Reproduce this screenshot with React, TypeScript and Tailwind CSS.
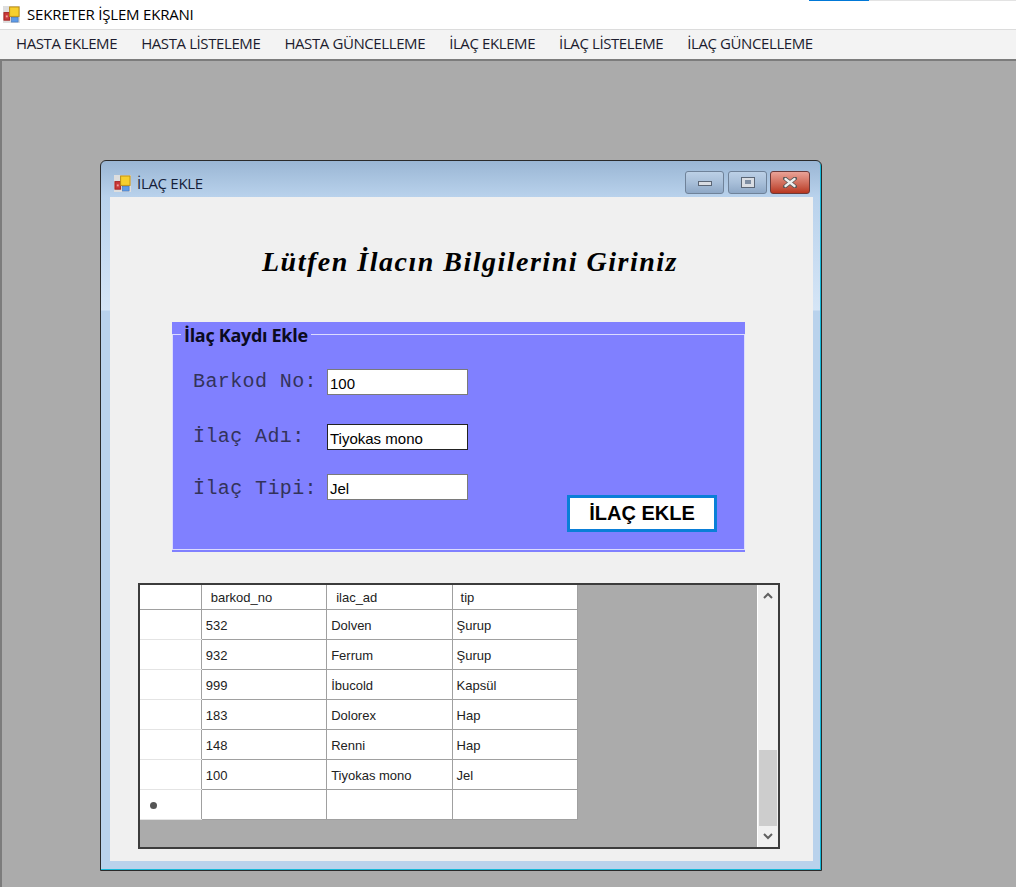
const menus = ["HASTA EKLEME", "HASTA LİSTELEME", "HASTA GÜNCELLEME", "İLAÇ EKLEME", "İLAÇ LİSTELEME", "İLAÇ GÜNCELLEME"];

const rows = [
  ["532", "Dolven", "Şurup"],
  ["932", "Ferrum", "Şurup"],
  ["999", "İbucold", "Kapsül"],
  ["183", "Dolorex", "Hap"],
  ["148", "Renni", "Hap"],
  ["100", "Tiyokas mono", "Jel"],
  ["", "", ""],
];

const fields = [
  { label: "Barkod No:", value: "100", mt: "mt-0", border: "border-[#7a7a7a]", nudge: "mt-0" },
  { label: "İlaç Adı:", value: "Tiyokas mono", mt: "mt-[30px]", border: "border-[#222]", nudge: "mt-0" },
  { label: "İlaç Tipi:", value: "Jel", mt: "mt-[25px]", border: "border-[#7a7a7a]", nudge: "mt-[3px]" },
];

function AppIcon({ className }: { className: string }) {
  return (
    <svg viewBox="0 0 18 18" className={className}>
      <rect width="18" height="18" fill="#dedede" />
      <rect x="1" y="7" width="6" height="8" fill="#c93a3a" stroke="#a52020" strokeWidth="1" />
      <rect x="3" y="10" width="2" height="2" fill="#f0a0a0" />
      <rect x="7" y="1" width="10" height="10" fill="#f7cf2e" stroke="#b98a10" strokeWidth="1" />
      <rect x="9" y="12" width="7" height="5" fill="#5f9be6" stroke="#3b6fb5" strokeWidth="0.6" />
    </svg>
  );
}

function TitleButtons() {
  return (
    <div className="flex items-center mr-[11px] mt-[6px]">
      <div className="w-[39px] h-[23px] rounded-[3px] border border-[#6f8299] bg-gradient-to-b from-[#bcd0e6] via-[#a8bfd9] to-[#8ea8c6] flex items-center justify-center">
        <div className="w-[14px] h-[5px] mt-[3px] bg-[#d9dde3] border border-[#5b6675]" />
      </div>
      <div className="ml-[4px] w-[39px] h-[23px] rounded-[3px] border border-[#6f8299] bg-gradient-to-b from-[#bcd0e6] via-[#a8bfd9] to-[#8ea8c6] flex items-center justify-center">
        <div className="w-[14px] h-[11px] bg-[#d9dde3] border border-[#5b6675] flex items-center justify-center">
          <div className="w-[6px] h-[4px] bg-[#7e8ea3]" />
        </div>
      </div>
      <div className="ml-[3px] w-[40px] h-[23px] rounded-[3px] border border-[#6b3a3a] bg-gradient-to-b from-[#e9a297] via-[#d2705f] to-[#b8361f] flex items-center justify-center">
        <svg viewBox="0 0 14 11" className="w-[14px] h-[11px]">
          <path d="M2 1.5 L12 9.5 M12 1.5 L2 9.5" stroke="#555" strokeWidth="4" strokeLinecap="round" />
          <path d="M2.5 2 L11.5 9 M11.5 2 L2.5 9" stroke="#eee" strokeWidth="2.4" strokeLinecap="round" />
        </svg>
      </div>
    </div>
  );
}

function Scrollbar() {
  return (
    <div className="w-[21px] h-full bg-[#f0f0f0] border-l border-l-[#fff] flex flex-col shrink-0">
      <div className="h-[20px] flex items-center justify-center">
        <svg viewBox="0 0 10 7" className="w-[10px] h-[7px]">
          <path d="M1 6 L5 2 L9 6" fill="none" stroke="#606060" strokeWidth="2" />
        </svg>
      </div>
      <div className="h-[145px]" />
      <div className="h-[76px] mx-[1px] bg-[#cdcdcd]" />
      <div className="flex-1 flex items-center justify-center">
        <svg viewBox="0 0 10 7" className="w-[10px] h-[7px]">
          <path d="M1 1 L5 5 L9 1" fill="none" stroke="#606060" strokeWidth="2" />
        </svg>
      </div>
    </div>
  );
}

function DataGrid() {
  const head = "border-r border-b border-[#a0a0a0] bg-white pt-[1px] text-left font-normal";
  const cell = "border-r border-b border-[#a0a0a0] bg-white pl-[4px] pt-[3px] text-left font-normal";
  return (
    <div className="ml-[28px] mt-[31px] w-[642px] h-[266px] border-2 border-[#3c3c3c] bg-[#ababab] flex justify-between text-[13px] text-[#222] font-['Liberation_Sans',sans-serif]">
      <table className="border-collapse table-fixed h-fit w-[438px]">
        <thead>
          <tr className="h-[24px]">
            <th className="w-[61px] bg-white border-r border-b border-[#a0a0a0]" />
            <th className={`${head} w-[125px] pl-[9px]`}>barkod_no</th>
            <th className={`${head} w-[125px] pl-[9px]`}>ilac_ad</th>
            <th className={`${head} w-[125px] pl-[8px]`}>tip</th>
          </tr>
        </thead>
        <tbody>
          {rows.map((r, i) => (
            <tr key={i} className="h-[30px]">
              <td className="bg-white border-r border-b border-r-[#a0a0a0] border-b-[#e4e4e4] text-center align-middle p-0">
                {i === rows.length - 1 && <span className="inline-block w-[7px] h-[7px] rounded-full bg-[#555] mr-[34px] mt-[8px]" />}
              </td>
              <td className={cell}>{r[0]}</td>
              <td className={cell}>{r[1]}</td>
              <td className={cell}>{r[2]}</td>
            </tr>
          ))}
        </tbody>
      </table>
      <Scrollbar />
    </div>
  );
}

function GroupBox() {
  return (
    <div className="ml-[62px] w-[573px] h-[230px] bg-[#8080ff] pt-[12px] flex">
      <div className="relative flex-1 h-[216px] border border-[#dcdcff] flex justify-between items-end">
        <div className="absolute left-[8px] -top-[12px] px-[3px] bg-[#8080ff] text-[18px] leading-[24px] font-bold tracking-[-0.3px] text-[#0b0b20] font-['Open_Sans',sans-serif]">
          İlaç Kaydı Ekle
        </div>
        <div className="h-full pt-[34px] pl-[20px] flex flex-col">
          {fields.map((f) => (
            <div key={f.label} className={`flex items-center h-[25px] ${f.mt}`}>
              <span className={`w-[134px] text-[20px] leading-[25px] tracking-[0.4px] text-[#33335a] font-['Liberation_Mono',monospace] ${f.nudge}`}>{f.label}</span>
              <div className={`w-[141px] h-[26px] bg-white border ${f.border} pl-[2px] text-[15px] leading-[28px] text-black font-['Liberation_Sans',sans-serif]`}>
                {f.value}
              </div>
            </div>
          ))}
        </div>
        <button className="w-[150px] h-[37px] mr-[27px] mb-[17px] pb-[3px] bg-white border-[3px] border-[#0a7fd8] text-[20px] font-bold text-black font-['Liberation_Sans',sans-serif]">
          İLAÇ EKLE
        </button>
      </div>
    </div>
  );
}

function ChildWindow() {
  return (
    <div className="ml-[100px] mt-[99px] w-[722px] h-[711px] border border-[#2a2a2a] rounded-t-[6px] bg-[linear-gradient(to_bottom,#9ab6d4_0px,#b9d2ec_36px,#d5e5f6_149px,#b9d2ec_150px,#b9d2ec_100%)] shadow-[inset_-1px_-1px_0_#16b8d8] flex flex-col">
      <div className="h-[36px] flex items-center justify-between shrink-0">
        <div className="flex items-center ml-[13px] mt-[8px] gap-[6px] text-[15px] tracking-[-0.3px] text-[#15203a] font-['Open_Sans',sans-serif]">
          <AppIcon className="w-[17px] h-[17px]" />
          <span>İLAÇ EKLE</span>
        </div>
        <TitleButtons />
      </div>
      <div className="flex-1 ml-[9px] mr-[8px] mb-[9px] bg-[#f0f0f0] flex flex-col">
        <div className="h-[125px] pt-[45px] pl-[152px] shrink-0 text-[28px] leading-[40px] italic font-semibold tracking-[1.5px] text-black font-['Liberation_Serif',cursive]">
          Lütfen İlacın Bilgilerini Giriniz
        </div>
        <GroupBox />
        <DataGrid />
      </div>
    </div>
  );
}

export default function App() {
  return (
    <div className="w-[1016px] h-[887px] overflow-hidden bg-[#ababab] flex flex-col font-['Open_Sans',sans-serif]">
      <div className="h-[29px] bg-white flex items-center relative shrink-0">
        <AppIcon className="ml-[3px] w-[17px] h-[17px]" />
        <span className="ml-[7px] text-[15px] tracking-[-0.2px] text-black">SEKRETER İŞLEM EKRANI</span>
        <div className="absolute top-0 left-[809px] w-[60px] h-[1px] bg-[#0078d7]" />
        <div className="absolute top-0 left-[869px] right-0 h-[1px] bg-[#e3e3e3]" />
      </div>
      <div className="h-[32px] bg-[#f3f3f3] border-t border-[#dcdcdc] border-b-[2px] border-b-[#7c7c7c] flex items-center pl-[4px] pb-[2px] shrink-0">
        {menus.map((m) => (
          <div key={m} className="px-[12px] text-[15px] tracking-[-0.4px] text-[#1c1c2e]">{m}</div>
        ))}
      </div>
      <div className="flex-1 border-l-2 border-l-[#7c7c7c]">
        <div className="-ml-[2px]">
          <ChildWindow />
        </div>
      </div>
    </div>
  );
}
